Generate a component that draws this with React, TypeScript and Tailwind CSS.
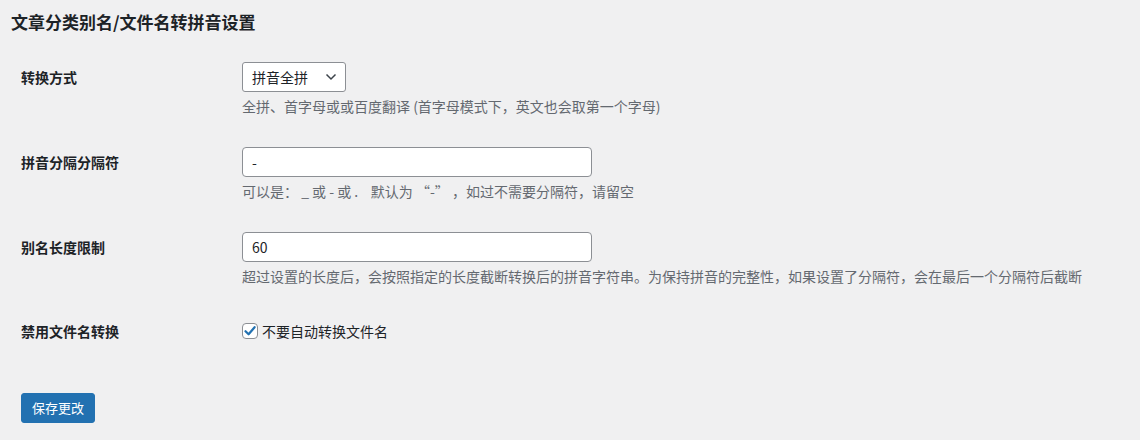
const font = "font-['Segoe_UI','Noto_Sans_CJK_SC',Roboto,sans-serif]";

function Row({ label, children, top = "pt-[15px]" }: { label: string; children: React.ReactNode; top?: string }) {
  return (
    <div className={`grid grid-cols-[221px_1fr] ${top} pb-[15px]`}>
      <div className="flex h-[30px] items-center text-[14px] font-semibold text-[#1d2327]">{label}</div>
      <div>{children}</div>
    </div>
  );
}

function Desc({ children }: { children: React.ReactNode }) {
  return <p className="mt-1 text-[14px] leading-[21px] text-[#646970]">{children}</p>;
}

export default function App() {
  return (
    <div lang="zh-CN" className={`min-h-[440px] w-[1140px] bg-[#f0f0f1] ${font} text-[#1d2327]`}>
      <h2 className="pl-[11px] pt-[11px] text-[17px] font-semibold leading-[22px]">文章分类别名/文件名转拼音设置</h2>

      <div className="mt-[14px] pl-[21px]">
        <Row label="转换方式">
          <div className="flex h-[30px] w-[104px] items-center justify-between rounded-[3px] border border-[#8c8f94] bg-white pl-[9px] pr-[8px] text-[14px]">
            <span>拼音全拼</span>
            <svg width="12" height="8" viewBox="0 0 12 8" fill="none">
              <path d="M1.5 1.5 6 6l4.5-4.5" stroke="#3c434a" strokeWidth="1.5" />
            </svg>
          </div>
          <Desc>全拼、首字母或或百度翻译 (首字母模式下，英文也会取第一个字母)</Desc>
        </Row>

        <Row label="拼音分隔分隔符">
          <div className="flex h-[30px] w-[350px] items-center rounded-[4px] border border-[#8c8f94] bg-white px-[9px] text-[14px]">-</div>
          <Desc>
            可以是：&nbsp;_&nbsp;或&nbsp;-&nbsp;或&nbsp;.&nbsp;&nbsp;&nbsp;&nbsp;默认为&nbsp;“-”&nbsp;，如过不需要分隔符，请留空
          </Desc>
        </Row>

        <Row label="别名长度限制">
          <div className="flex h-[30px] w-[350px] items-center rounded-[4px] border border-[#8c8f94] bg-white px-[9px] text-[14px]">60</div>
          <Desc>超过设置的长度后，会按照指定的长度截断转换后的拼音字符串。为保持拼音的完整性，如果设置了分隔符，会在最后一个分隔符后截断</Desc>
        </Row>

        <Row label="禁用文件名转换" top="pt-[14px]">
          <label className="flex h-[30px] items-center gap-[4px] text-[14px]">
            <span className="flex h-4 w-4 items-center justify-center rounded-[4px] border border-[#8c8f94] bg-white">
              <svg width="14" height="14" viewBox="0 0 14 14" fill="none">
                <path d="M2.5 7.2 5.6 10.3 11.6 3.2" stroke="#2271b1" strokeWidth="2.2" strokeLinecap="round" strokeLinejoin="round" />
              </svg>
            </span>
            不要自动转换文件名
          </label>
        </Row>

        <button className="mt-[32px] h-[30px] rounded-[3px] border border-[#2271b1] bg-[#2271b1] px-[10px] text-[13px] text-white">
          保存更改
        </button>
      </div>
    </div>
  );
}
